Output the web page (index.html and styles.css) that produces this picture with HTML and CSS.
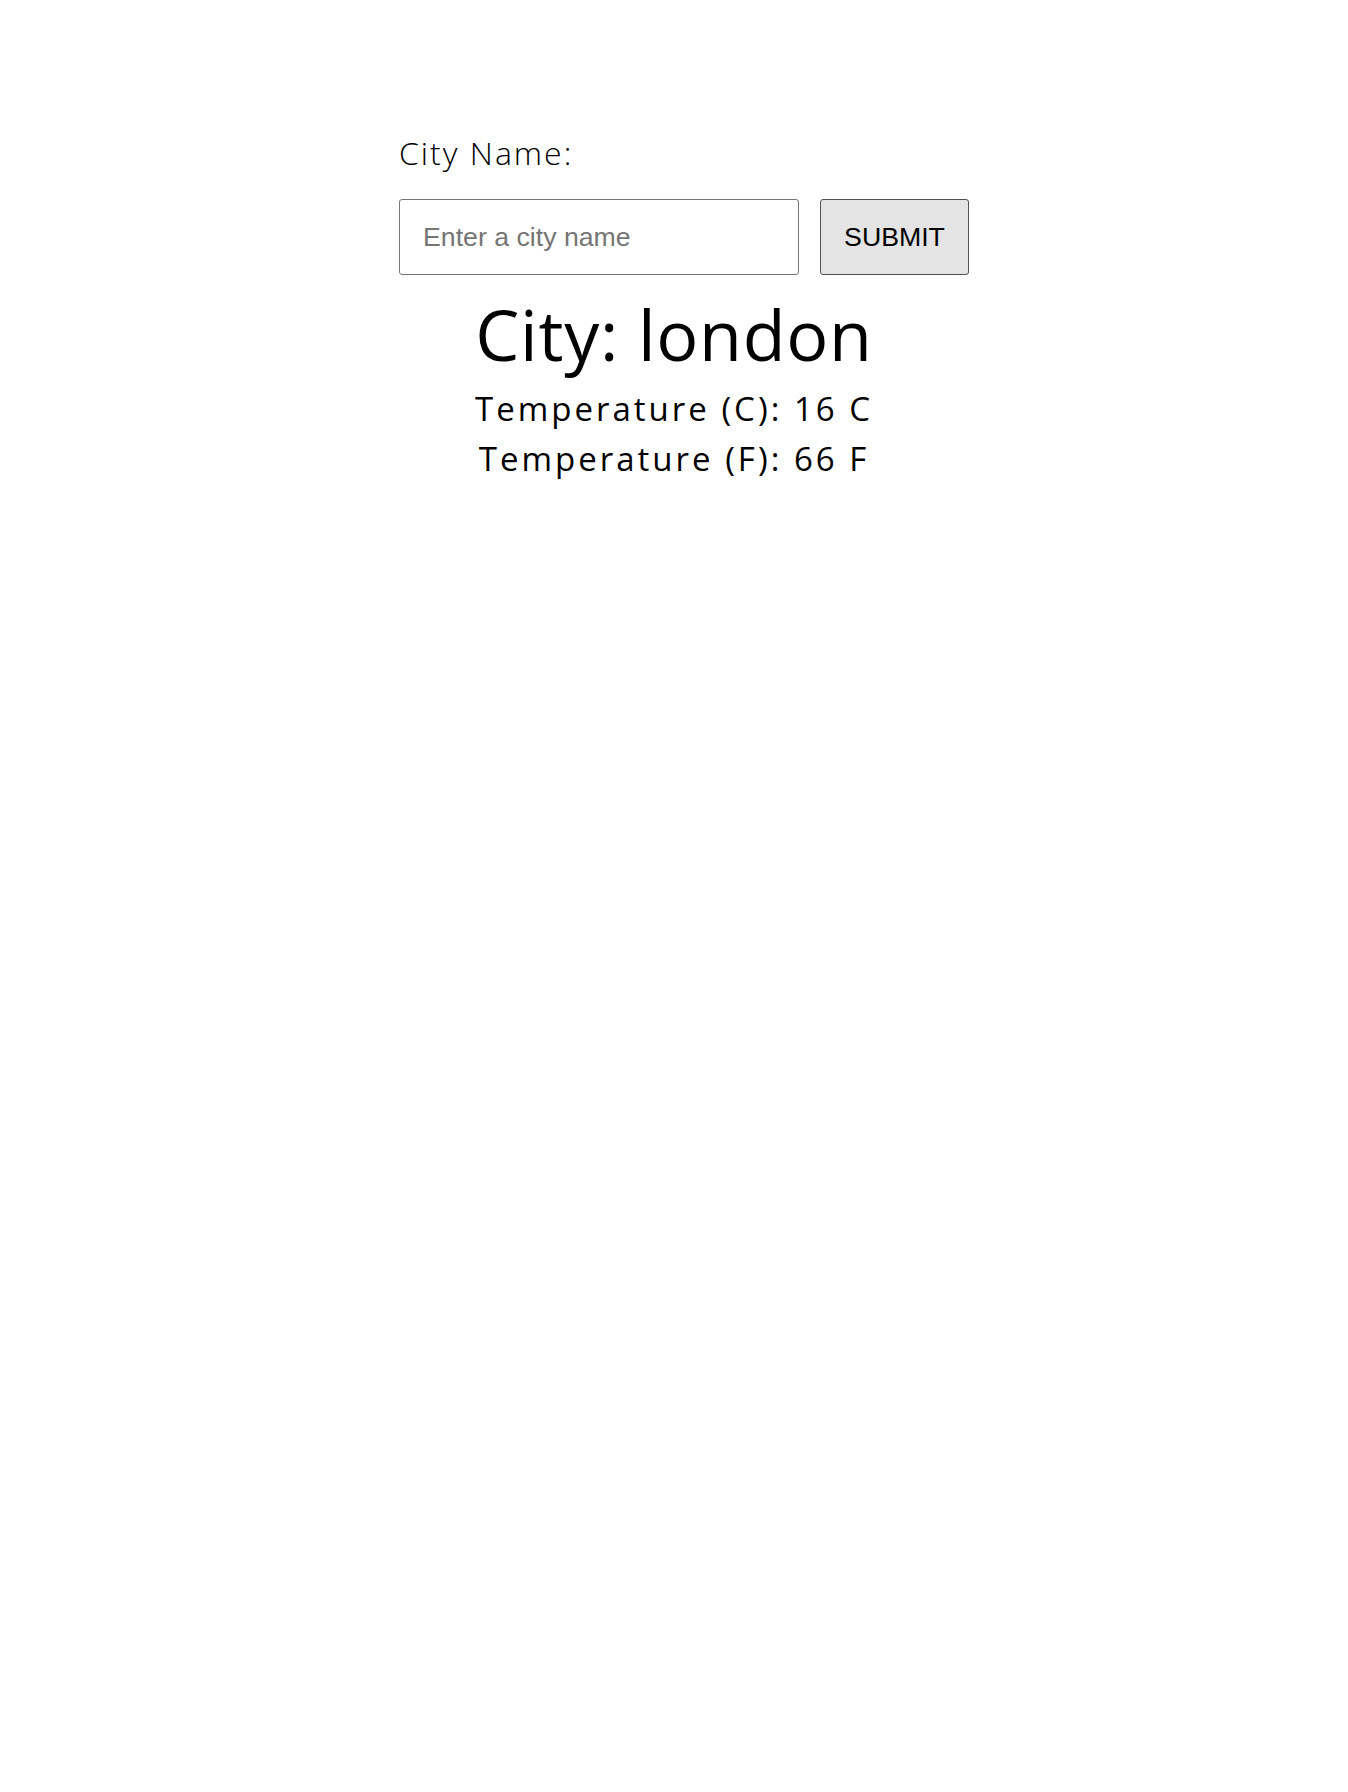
FILE: index.html
```html
<!DOCTYPE html>
<html lang="en">
<head>
<meta charset="utf-8">
<title>Weather</title>
<link rel="stylesheet" href="styles.css">
</head>
<body>
<main class="app">
  <form class="search">
    <label class="label" for="city">City Name:</label>
    <div class="row">
      <input id="city" class="input" type="text" placeholder="Enter a city name">
      <button class="submit" type="button">SUBMIT</button>
    </div>
  </form>
  <section class="result">
    <h1 class="city">City: london</h1>
    <p class="temp">Temperature (C): 16 C</p>
    <p class="temp">Temperature (F): 66 F</p>
  </section>
</main>
</body>
</html>
```

FILE: styles.css
```css
html, body {
  margin: 0;
  padding: 0;
  background: #ffffff;
}

body {
  font-family: "Open Sans", "Noto Sans", sans-serif;
  color: #000;
}

.app {
  width: 550px;
  margin: 0 auto;
  padding-top: 133px;
}

.search {
  display: flex;
  flex-direction: column;
}

.label {
  font-size: 32px;
  font-weight: 300;
  line-height: 40px;
  letter-spacing: 2px;
}

.row {
  display: flex;
  gap: 21px;
  margin-top: 26px;
}

.input {
  flex: 0 0 auto;
  box-sizing: border-box;
  width: 400px;
  height: 76px;
  margin: 0;
  padding: 0 23px;
  border: 1px solid #767676;
  border-radius: 3px;
  font-family: "Liberation Sans", Arial, sans-serif;
  font-size: 26.7px;
  color: #000;
  background: #fff;
}

.input::placeholder {
  color: #757575;
}

.submit {
  flex: 0 0 auto;
  box-sizing: border-box;
  width: 149px;
  height: 76px;
  margin: 0;
  padding: 0;
  border: 1px solid #505050;
  border-radius: 3px;
  background: #e4e4e4;
  font-family: "Liberation Sans", Arial, sans-serif;
  font-size: 26.7px;
  color: #000;
}

.result {
  text-align: center;
  margin-top: 19px;
}

.city {
  margin: 0;
  font-size: 70px;
  font-weight: 400;
  line-height: 80px;
  letter-spacing: 0.7px;
}

.temp {
  margin: 0;
  font-size: 33px;
  font-weight: 500;
  line-height: 50px;
  letter-spacing: 3px;
}

.city + .temp {
  margin-top: 10px;
}
```
